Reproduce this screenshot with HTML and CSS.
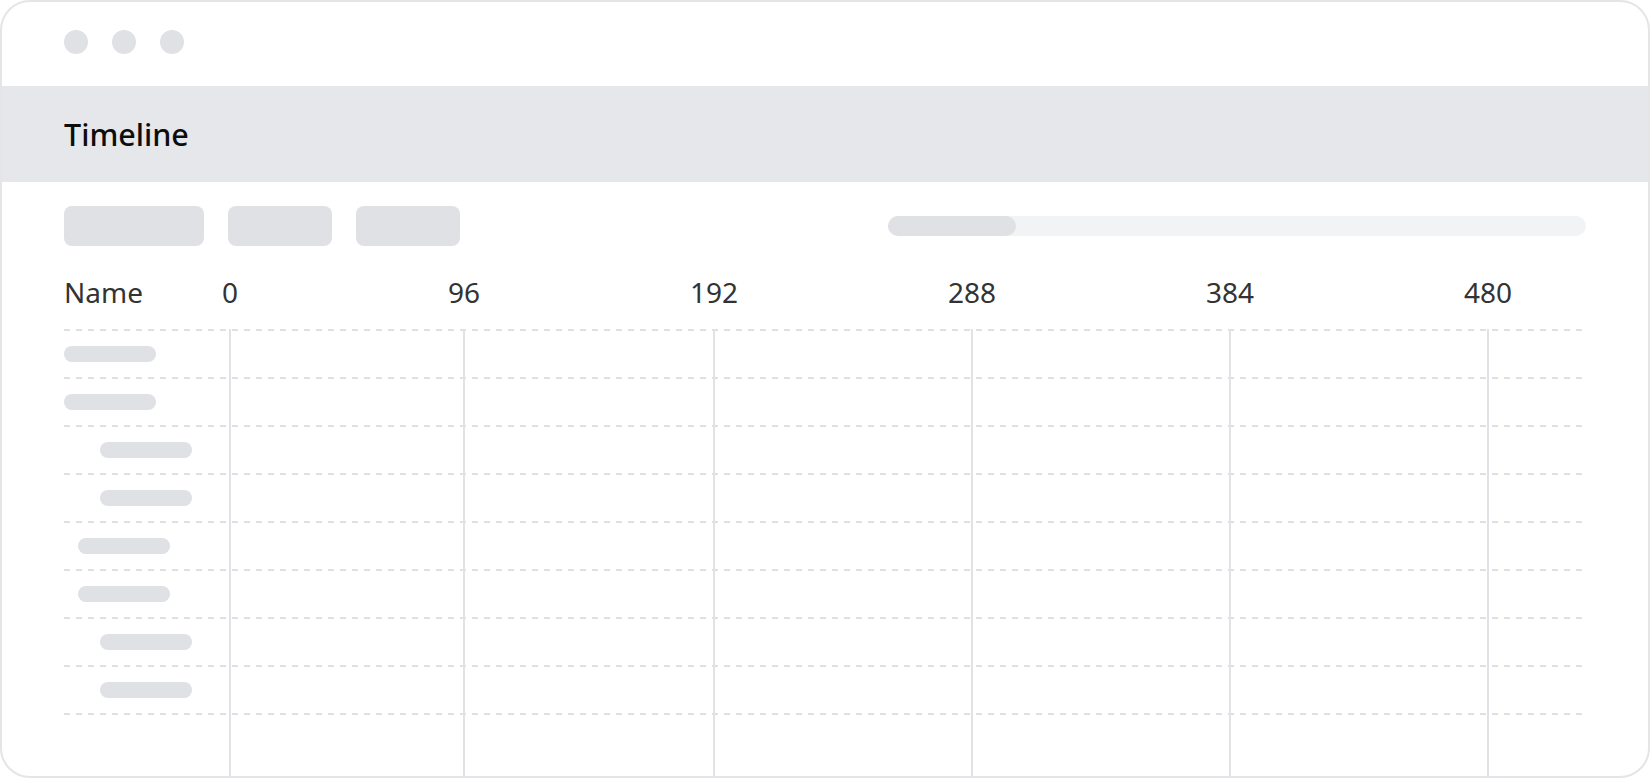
FILE: index.html
```html
<!DOCTYPE html>
<html lang="en">
<head>
<meta charset="utf-8">
<title>Timeline</title>
<link rel="stylesheet" href="styles.css">
</head>
<body>
<div class="window">
  <div class="titlebar">
    <span class="dot"></span>
    <span class="dot"></span>
    <span class="dot"></span>
  </div>
  <div class="header">
    <h1 class="title">Timeline</h1>
  </div>
  <div class="content">
    <div class="toolbar">
      <span class="btn btn-wide"></span>
      <span class="btn"></span>
      <span class="btn"></span>
      <div class="scrollbar"><span class="thumb"></span></div>
    </div>
    <div class="axis">
      <div class="name-col">Name</div>
      <div class="ticks">
        <span class="tick">0</span>
        <span class="tick">96</span>
        <span class="tick">192</span>
        <span class="tick">288</span>
        <span class="tick">384</span>
        <span class="tick">480</span>
      </div>
    </div>
    <div class="rows">
      <div class="row"><span class="bar"></span></div>
      <div class="row"><span class="bar"></span></div>
      <div class="row indent-deep"><span class="bar"></span></div>
      <div class="row indent-deep"><span class="bar"></span></div>
      <div class="row indent-mid"><span class="bar"></span></div>
      <div class="row indent-mid"><span class="bar"></span></div>
      <div class="row indent-deep"><span class="bar"></span></div>
      <div class="row indent-deep last"><span class="bar"></span></div>
    </div>
  </div>
</div>
</body>
</html>
```

FILE: styles.css
```css
* { box-sizing: border-box; }

html, body {
  margin: 0;
  padding: 0;
  background: #ffffff;
}

body {
  width: 1650px;
  height: 778px;
  font-family: "Noto Sans", "Open Sans", sans-serif;
}

.window {
  position: relative;
  width: 1650px;
  height: 778px;
  border: 2px solid #e4e4e9;
  border-radius: 30px;
  overflow: hidden;
  background: #ffffff;
  display: flex;
  flex-direction: column;
}

.titlebar {
  height: 84px;
  padding: 28px 0 0 62px;
  display: flex;
  gap: 24px;
  align-items: flex-start;
}

.dot {
  width: 24px;
  height: 24px;
  border-radius: 50%;
  background: #e0e1e5;
}

.header {
  height: 96px;
  background: #e6e7eb;
  display: flex;
  align-items: center;
  padding-left: 62px;
}

.title {
  margin: 0;
  font-size: 30.5px;
  font-weight: 500;
  line-height: 1;
  color: #0d0d0d;
}

.content {
  flex: 1;
  padding: 24px 62px 0 62px;
  display: flex;
  flex-direction: column;
}

.toolbar {
  height: 40px;
  display: flex;
  align-items: center;
  gap: 24px;
}

.btn {
  width: 104px;
  height: 40px;
  border-radius: 8px;
  background: #e0e1e5;
}

.btn-wide {
  width: 140px;
}

.scrollbar {
  margin-left: auto;
  width: 698px;
  height: 20px;
  border-radius: 10px;
  background: #f2f3f5;
  display: flex;
}

.thumb {
  width: 128px;
  height: 20px;
  border-radius: 10px;
  background: #e0e1e5;
}

.axis {
  margin-top: 32px;
  height: 28px;
  display: flex;
  font-size: 28px;
  line-height: 28px;
  color: #333333;
}

.name-col {
  width: 158px;
  flex: none;
}

.ticks {
  flex: 1;
  display: flex;
  justify-content: space-between;
  padding-right: 74px;
}

.tick {
  position: relative;
  text-align: center;
}

.tick::after {
  content: "";
  position: absolute;
  left: calc(50% - 1px);
  top: 51px;
  width: 2px;
  height: 500px;
  background: #e1e1e6;
}

.rows {
  margin-top: 23px;
  margin-right: 4px;
  display: flex;
  flex-direction: column;
}

.row {
  height: 48px;
  padding-top: 2px;
  display: flex;
  align-items: center;
  background-image: linear-gradient(to right, #dfe0e4 0 6px, transparent 6px 12px);
  background-size: 12px 2px;
  background-repeat: repeat-x;
  background-position: left top;
}

.row.last {
  height: 50px;
  padding-bottom: 2px;
  background-image:
    linear-gradient(to right, #dfe0e4 0 6px, transparent 6px 12px),
    linear-gradient(to right, #dfe0e4 0 6px, transparent 6px 12px);
  background-size: 12px 2px, 12px 2px;
  background-repeat: repeat-x, repeat-x;
  background-position: left top, left bottom;
}

.bar {
  width: 92px;
  height: 16px;
  border-radius: 8px;
  background: #e0e1e5;
}

.indent-mid .bar { margin-left: 14px; }
.indent-deep .bar { margin-left: 36px; }
```
